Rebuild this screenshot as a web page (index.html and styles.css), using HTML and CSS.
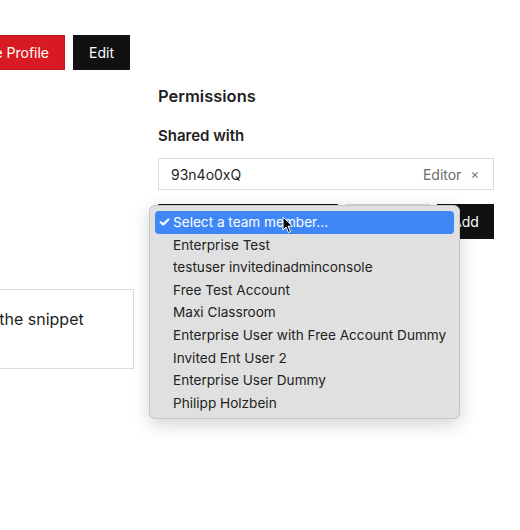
FILE: index.html
```html
<!DOCTYPE html>
<html lang="en">
<head>
    <meta charset="UTF-8">
    <meta name="viewport" content="width=device-width, initial-scale=1.0">
    <title>Profile Permissions</title>
    <link rel="stylesheet" href="styles.css">
</head>
<body>
    <div class="layout">
        <!-- Left column -->
        <div class="side">
            <div class="toolbar">
                <button class="btn btn-red">Delete Profile</button>
                <button class="btn btn-dark">Edit</button>
            </div>
            <div class="card">
                <p>Copy the snippet</p>
            </div>
        </div>

        <!-- Permissions -->
        <section class="permissions">
            <h2>Permissions</h2>
            <h3>Shared with</h3>
            <div class="shared-row">
                <span class="member">93n4o0xQ</span>
                <span class="role">Editor</span>
                <span class="remove">&times;</span>
            </div>
            <div class="add-row">
                <div class="select select-member"></div>
                <div class="select select-role"></div>
                <button class="btn btn-dark btn-add">Add</button>

                <!-- Open select menu -->
                <ul class="menu">
                    <li class="active"><span class="check">&#10003;</span>Select a team member...</li>
                    <li>Enterprise Test</li>
                    <li>testuser invitedinadminconsole</li>
                    <li>Free Test Account</li>
                    <li>Maxi Classroom</li>
                    <li>Enterprise User with Free Account Dummy</li>
                    <li>Invited Ent User 2</li>
                    <li>Enterprise User Dummy</li>
                    <li>Philipp Holzbein</li>
                </ul>
                <svg class="cursor" width="12" height="18" viewBox="0 0 12 18">
                    <path d="M1 1 L1 14 L4 11 L6.5 16.5 L8.5 15.6 L6 10.2 L10.5 10.2 Z" fill="#000" stroke="#fff" stroke-width="1"/>
                </svg>
            </div>
        </section>
    </div>
</body>
</html>
```

FILE: styles.css
```css
* {
    margin: 0;
    padding: 0;
    box-sizing: border-box;
}

body {
    width: 520px;
    height: 530px;
    overflow: hidden;
    background: #fff;
    font-family: Inter, "Noto Sans", sans-serif;
    color: #1f1f1f;
}

.layout {
    display: flex;
    align-items: flex-start;
    gap: 24px;
    margin-left: -66px;
}

/* Left column */
.side {
    width: 200px;
    flex-shrink: 0;
}

.toolbar {
    display: flex;
    justify-content: flex-end;
    gap: 8px;
    margin-top: 35px;
    padding-right: 4px;
}

.btn {
    height: 35px;
    padding: 0 15px;
    font-family: inherit;
    font-size: 14px;
    color: #fff;
    border: 1px solid transparent;
    cursor: pointer;
}

.btn-red {
    background: #d81b22;
    border-color: #c3161c;
}

.btn-dark {
    background: #111;
    border-color: #111;
}

.card {
    margin-top: 219px;
    height: 80px;
    padding: 19px 24px 19px 21px;
    border: 1px solid #dcdcdc;
    border-left: none;
}

.card p {
    font-size: 16px;
    line-height: 20px;
    white-space: nowrap;
}

/* Permissions */
.permissions {
    width: 336px;
    flex-shrink: 0;
}

.permissions h2 {
    margin-top: 84px;
    font-size: 16.5px;
    line-height: 24px;
    font-weight: 600;
}

.permissions h3 {
    margin-top: 18px;
    font-size: 15px;
    line-height: 20px;
    font-weight: 600;
}

.shared-row {
    display: flex;
    align-items: center;
    height: 32px;
    margin-top: 12px;
    padding: 0 14px 0 12px;
    border: 1px solid #dcdcdc;
    font-size: 14px;
}

.member {
    flex: 1;
}

.role {
    color: #6b6b6b;
}

.remove {
    margin-left: 9px;
    color: #777;
    font-size: 13px;
}

.add-row {
    position: relative;
    display: flex;
    gap: 7px;
    margin-top: 14px;
}

.select {
    height: 35px;
    border: 1px solid #d8d8d8;
}

.select-member {
    width: 180px;
    border-top: 2px solid #111;
}

.select-role {
    width: 85px;
}

.btn-add {
    width: 57px;
    padding: 0;
}

/* Native-looking select menu */
.menu {
    position: absolute;
    top: 1px;
    left: -9px;
    width: 311px;
    padding: 5px 5px 4px;
    list-style: none;
    background: #e0e0e0;
    border: 1px solid #c6c6c6;
    border-radius: 6px;
    box-shadow: 0 5px 18px rgba(0, 0, 0, 0.18);
    font-family: Inter, "Noto Sans", sans-serif;
    font-size: 13.6px;
    color: #222;
}

.menu li {
    height: 22.6px;
    line-height: 22.6px;
    padding-left: 18px;
    white-space: nowrap;
}

.menu li.active {
    position: relative;
    background: #3f87f6;
    color: #fff;
    border-radius: 4px;
}

.check {
    position: absolute;
    left: 3px;
    font-size: 14px;
    font-weight: 700;
}

.cursor {
    position: absolute;
    top: 12px;
    left: 124px;
}
```
